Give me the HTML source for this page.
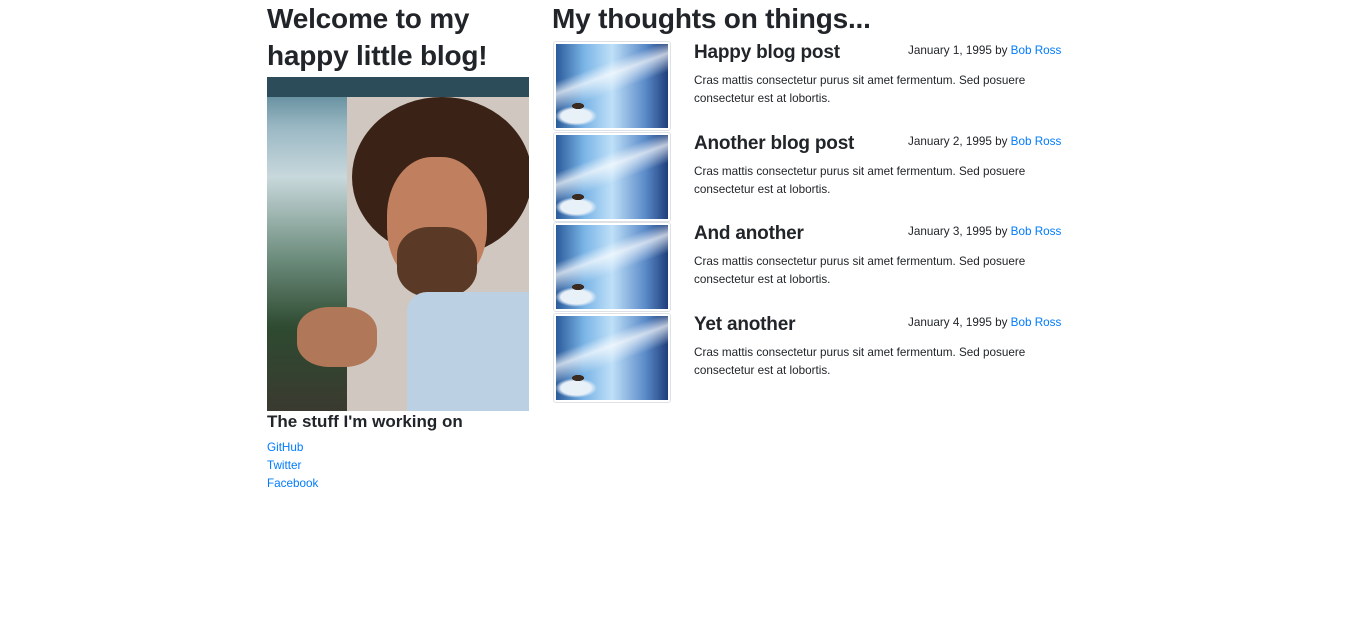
<!DOCTYPE html>
<html><head><meta charset="utf-8"><style>
body{margin:0;width:1366px;height:639px;background:#fff;font-family:"Liberation Sans",sans-serif;color:#212529;position:relative;overflow:hidden}
.a{position:absolute;white-space:nowrap}
h1{margin:0;font-weight:bold;font-size:28px;line-height:37px;letter-spacing:-0.2px}
a{color:#007bff;text-decoration:none}
.thumb{position:absolute;left:553px;width:116px;height:88px;border:1px solid #dee2e6;border-radius:3px;background:#fff}
.thumb div{position:absolute;left:2px;top:2px;width:112px;height:84px;
background:
radial-gradient(ellipse 10px 5px at 22px 62px,#3a2a20 60%,transparent 62%),
radial-gradient(ellipse 30px 14px at 20px 72px,#e8f0f8 50%,transparent 70%),
linear-gradient(160deg,transparent 30%,rgba(255,255,255,.7) 40%,transparent 55%),
linear-gradient(90deg,#2a5a9a 0%,#7ab4e6 25%,#bfe0f8 50%,#5a8ac8 80%,#1e3e7a 100%);}
.t{font-size:19px;font-weight:bold;color:#212529;letter-spacing:-0.2px}
.m{font-size:11.7px}
.p{font-size:11.7px;line-height:18px;white-space:normal;width:370px}
</style></head><body>
<h1 class="a" style="left:267px;top:0px">Welcome to my<br>happy little blog!</h1>
<div class="a" style="left:267px;top:77px;width:262px;height:334px;overflow:hidden;background:linear-gradient(180deg,#4a7a8a 0%,#9ab8c4 15%,#c8d8dc 30%,#6a8a7a 55%,#2e4a30 75%,#3a3a30 100%)">
 <div style="position:absolute;left:0;top:0;width:262px;height:20px;background:#2c4c5a"></div>
 <div style="position:absolute;left:80px;top:20px;width:182px;height:314px;background:#d0c8c0"></div>
 <div style="position:absolute;left:85px;top:20px;width:180px;height:160px;border-radius:50%;background:#3a2216"></div>
 <div style="position:absolute;left:120px;top:80px;width:100px;height:130px;border-radius:45%;background:#c08060"></div>
 <div style="position:absolute;left:130px;top:150px;width:80px;height:70px;border-radius:40%;background:#5a3a26"></div>
 <div style="position:absolute;left:140px;top:215px;width:130px;height:130px;background:#bcd0e4;border-radius:20px 0 0 0"></div>
 <div style="position:absolute;left:30px;top:230px;width:80px;height:60px;border-radius:40%;background:#b07858"></div>
</div>
<div class="a" style="left:267px;top:411px;font-size:17px;font-weight:bold;line-height:22px">The stuff I'm working on</div>
<div class="a" style="left:267px;top:439px;font-size:11.7px;line-height:18px"><a>GitHub</a><br><a>Twitter</a><br><a>Facebook</a></div>
<h1 class="a" style="left:552px;top:0px">My thoughts on things...</h1>

<div class="thumb" style="top:41px"><div></div></div>
<div class="a t" style="left:694px;top:42px">Happy blog post</div>
<div class="a m" style="left:908px;top:44px">January 1, 1995 by <a>Bob Ross</a></div>
<div class="a p" style="left:694px;top:72px">Cras mattis consectetur purus sit amet fermentum. Sed posuere consectetur est at lobortis.</div>

<div class="thumb" style="top:132px"><div></div></div>
<div class="a t" style="left:694px;top:133px">Another blog post</div>
<div class="a m" style="left:908px;top:135px">January 2, 1995 by <a>Bob Ross</a></div>
<div class="a p" style="left:694px;top:163px">Cras mattis consectetur purus sit amet fermentum. Sed posuere consectetur est at lobortis.</div>

<div class="thumb" style="top:222px"><div></div></div>
<div class="a t" style="left:694px;top:223px">And another</div>
<div class="a m" style="left:908px;top:225px">January 3, 1995 by <a>Bob Ross</a></div>
<div class="a p" style="left:694px;top:253px">Cras mattis consectetur purus sit amet fermentum. Sed posuere consectetur est at lobortis.</div>

<div class="thumb" style="top:313px"><div></div></div>
<div class="a t" style="left:694px;top:314px">Yet another</div>
<div class="a m" style="left:908px;top:316px">January 4, 1995 by <a>Bob Ross</a></div>
<div class="a p" style="left:694px;top:344px">Cras mattis consectetur purus sit amet fermentum. Sed posuere consectetur est at lobortis.</div>
</body></html>
